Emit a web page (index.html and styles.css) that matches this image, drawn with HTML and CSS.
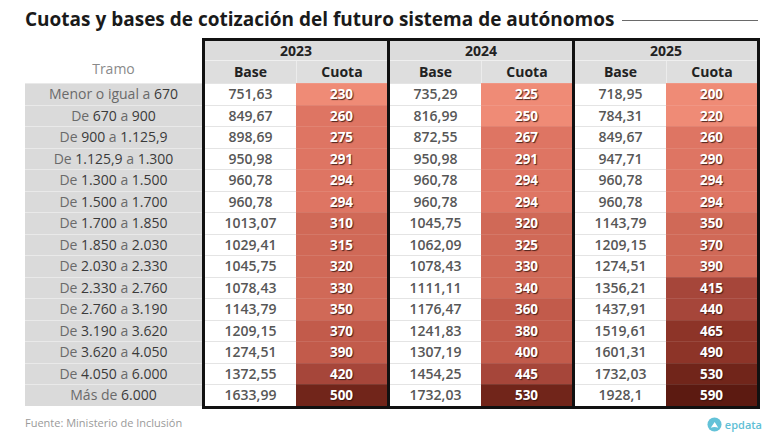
FILE: index.html
```html
<!DOCTYPE html>
<html lang="es">
<head>
<meta charset="utf-8">
<title>Cuotas y bases de cotización</title>
<link rel="stylesheet" href="styles.css">
</head>
<body>
<div class="page">
  <header class="title-row">
    <h1>Cuotas y bases de cotización del futuro sistema de autónomos</h1>
    <span class="rule"></span>
  </header>

  <div class="table">
    <div class="tramo-col">
      <div class="tramo-head">Tramo</div>
      <div class="tramo">Menor o igual a <b>670</b></div>
      <div class="tramo">De <b>670</b> a <b>900</b></div>
      <div class="tramo">De <b>900</b> a <b>1.125,9</b></div>
      <div class="tramo">De <b>1.125,9</b> a <b>1.300</b></div>
      <div class="tramo">De <b>1.300</b> a <b>1.500</b></div>
      <div class="tramo">De <b>1.500</b> a <b>1.700</b></div>
      <div class="tramo">De <b>1.700</b> a <b>1.850</b></div>
      <div class="tramo">De <b>1.850</b> a <b>2.030</b></div>
      <div class="tramo">De <b>2.030</b> a <b>2.330</b></div>
      <div class="tramo">De <b>2.330</b> a <b>2.760</b></div>
      <div class="tramo">De <b>2.760</b> a <b>3.190</b></div>
      <div class="tramo">De <b>3.190</b> a <b>3.620</b></div>
      <div class="tramo">De <b>3.620</b> a <b>4.050</b></div>
      <div class="tramo">De <b>4.050</b> a <b>6.000</b></div>
      <div class="tramo">Más de <b>6.000</b></div>
    </div>

    <div class="year">
      <div class="year-head">2023</div>
      <div class="sub-head"><span>Base</span><span>Cuota</span></div>
      <div class="rows">
        <div class="base">751,63</div><div class="cuota l0">230</div>
        <div class="base">849,67</div><div class="cuota l1">260</div>
        <div class="base">898,69</div><div class="cuota l1">275</div>
        <div class="base">950,98</div><div class="cuota l1">291</div>
        <div class="base">960,78</div><div class="cuota l1">294</div>
        <div class="base">960,78</div><div class="cuota l1">294</div>
        <div class="base">1013,07</div><div class="cuota l2">310</div>
        <div class="base">1029,41</div><div class="cuota l2">315</div>
        <div class="base">1045,75</div><div class="cuota l2">320</div>
        <div class="base">1078,43</div><div class="cuota l2">330</div>
        <div class="base">1143,79</div><div class="cuota l2">350</div>
        <div class="base">1209,15</div><div class="cuota l3">370</div>
        <div class="base">1274,51</div><div class="cuota l3">390</div>
        <div class="base">1372,55</div><div class="cuota l4">420</div>
        <div class="base">1633,99</div><div class="cuota l6">500</div>
      </div>
    </div>

    <div class="year">
      <div class="year-head">2024</div>
      <div class="sub-head"><span>Base</span><span>Cuota</span></div>
      <div class="rows">
        <div class="base">735,29</div><div class="cuota l0">225</div>
        <div class="base">816,99</div><div class="cuota l0">250</div>
        <div class="base">872,55</div><div class="cuota l1">267</div>
        <div class="base">950,98</div><div class="cuota l1">291</div>
        <div class="base">960,78</div><div class="cuota l1">294</div>
        <div class="base">960,78</div><div class="cuota l1">294</div>
        <div class="base">1045,75</div><div class="cuota l2">320</div>
        <div class="base">1062,09</div><div class="cuota l2">325</div>
        <div class="base">1078,43</div><div class="cuota l2">330</div>
        <div class="base">1111,11</div><div class="cuota l2">340</div>
        <div class="base">1176,47</div><div class="cuota l3">360</div>
        <div class="base">1241,83</div><div class="cuota l3">380</div>
        <div class="base">1307,19</div><div class="cuota l3">400</div>
        <div class="base">1454,25</div><div class="cuota l4">445</div>
        <div class="base">1732,03</div><div class="cuota l6">530</div>
      </div>
    </div>

    <div class="year last">
      <div class="year-head">2025</div>
      <div class="sub-head"><span>Base</span><span>Cuota</span></div>
      <div class="rows">
        <div class="base">718,95</div><div class="cuota l0">200</div>
        <div class="base">784,31</div><div class="cuota l0">220</div>
        <div class="base">849,67</div><div class="cuota l1">260</div>
        <div class="base">947,71</div><div class="cuota l1">290</div>
        <div class="base">960,78</div><div class="cuota l1">294</div>
        <div class="base">960,78</div><div class="cuota l1">294</div>
        <div class="base">1143,79</div><div class="cuota l2">350</div>
        <div class="base">1209,15</div><div class="cuota l2">370</div>
        <div class="base">1274,51</div><div class="cuota l2">390</div>
        <div class="base">1356,21</div><div class="cuota l4">415</div>
        <div class="base">1437,91</div><div class="cuota l4">440</div>
        <div class="base">1519,61</div><div class="cuota l5">465</div>
        <div class="base">1601,31</div><div class="cuota l5">490</div>
        <div class="base">1732,03</div><div class="cuota l6">530</div>
        <div class="base">1928,1</div><div class="cuota l7">590</div>
      </div>
    </div>
  </div>

  <footer class="foot">
    <span class="source">Fuente: Ministerio de Inclusión</span>
    <span class="logo">
      <svg class="logo-mark" width="15" height="15" viewBox="0 0 16 16" aria-hidden="true">
        <circle cx="8" cy="8" r="7.5" fill="#63c2d8"/>
        <path d="M4 11.5 L8.2 5.2 L12 11.5 Q8 9.6 4 11.5 Z" fill="#ffffff"/>
      </svg>
      <span class="logo-text">epdata</span>
    </span>
  </footer>
</div>
</body>
</html>
```
FILE: styles.css
```css
* { box-sizing: border-box; }

html, body {
  margin: 0;
  padding: 0;
  background: #ffffff;
}

body {
  font-family: "Open Sans", "Noto Sans", "DejaVu Sans", sans-serif;
  color: #333;
}

.page {
  width: 780px;
  height: 440px;
  padding: 7px 20px 0 25px;
  overflow: hidden;
}

/* Title */
.title-row {
  display: flex;
  align-items: center;
  margin-right: 2px;
}

.title-row h1 {
  margin: 0;
  font-size: 19px;
  line-height: 24px;
  font-weight: 700;
  color: #1a1a1a;
  white-space: nowrap;
}

.rule {
  flex: 1;
  height: 1px;
  background: #6a6a6a;
  margin-left: 8px;
  margin-top: 3px;
}

/* Table */
.table {
  display: flex;
  align-items: flex-start;
  margin-top: 7px;
}

.tramo-col {
  width: 177px;
  display: flex;
  flex-direction: column;
}

.tramo-head {
  height: 45px;
  display: flex;
  align-items: flex-end;
  justify-content: center;
  padding-bottom: 3px;
  line-height: 22px;
  font-size: 14px;
  color: #8a8a8a;
}

.tramo {
  height: 21.53px;
  line-height: 20px;
  background: #dadada;
  border-top: 1px solid #e9e9e9;
  text-align: center;
  font-size: 14px;
  color: #6a6a6a;
  white-space: nowrap;
}

.tramo b {
  font-weight: 400;
  color: #3a3a3a;
}

.year {
  width: 185px;
  border: 3px solid #111111;
  border-right: none;
}

.year.last {
  width: 188px;
  border-right: 3px solid #111111;
}

.year-head {
  height: 20px;
  line-height: 20px;
  background: #dcdcdc;
  border-bottom: 1px solid #efefef;
  text-align: center;
  font-size: 14px;
  font-weight: 700;
  color: #222;
}

.sub-head {
  display: grid;
  grid-template-columns: 91px 91px;
  height: 22px;
}

.sub-head span {
  background: #dedede;
  line-height: 22px;
  text-align: center;
  font-size: 14px;
  font-weight: 700;
  color: #222;
}

.sub-head span + span {
  border-left: 1px solid #ececec;
}

.rows {
  display: grid;
  grid-template-columns: 91px 91px;
  grid-auto-rows: 21.53px;
}

.base {
  background: #ffffff;
  border-top: 1px solid #e4e4e4;
  line-height: 20px;
  text-align: center;
  font-size: 14px;
  font-weight: 600;
  color: #575757;
}

.cuota {
  border-top: 1px solid rgba(255, 255, 255, 0.1);
  line-height: 20px;
  text-align: center;
  font-size: 13.5px;
  font-weight: 700;
  color: #ffffff;
  text-shadow: 1px 1px 1px rgba(50, 20, 15, 0.85);
}

.l0 { background: #ef8b76; }
.l1 { background: #de7563; }
.l2 { background: #d06957; }
.l3 { background: #c25b4b; }
.l4 { background: #a6463a; }
.l5 { background: #8d3428; }
.l6 { background: #71251a; }
.l7 { background: #5c1a11; }

/* Footer */
.foot {
  display: flex;
  justify-content: space-between;
  align-items: center;
  height: 20px;
  margin-top: 4px;
  margin-right: -2px;
}

.source {
  font-size: 11px;
  color: #9a9a9a;
}

.logo {
  display: flex;
  align-items: center;
  gap: 3px;
  margin-top: 3px;
}

.logo-mark {
  display: block;
}

.logo-text {
  font-size: 11px;
  font-weight: 600;
  color: #5fbfd6;
}
```
